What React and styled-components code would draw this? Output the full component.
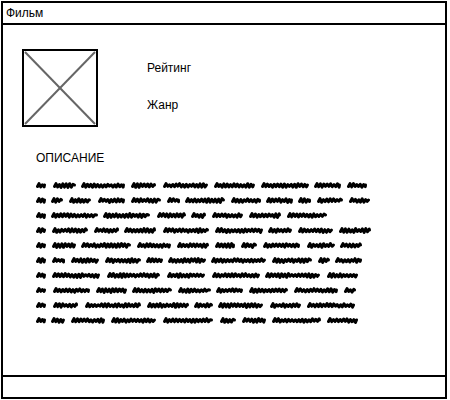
import React from 'react';
import styled, { createGlobalStyle } from 'styled-components';

const GlobalStyle = createGlobalStyle`
  html, body {
    margin: 0;
    padding: 0;
    background: #fff;
  }
  body {
    font-family: "Liberation Sans", Arial, sans-serif;
    color: #000;
  }
`;

// ширины строк "текста-заглушки" (в px)
const lineWidths = [331, 334, 291, 335, 326, 326, 322, 320, 319, 322];

function rng(seed) {
  let s = seed;
  return () => {
    s = (s * 16807) % 2147483647;
    return (s - 1) / 2147483646;
  };
}

function makeWords(total, seed) {
  const rand = rng(seed);
  const words = [];
  let x = 0;
  while (x < total) {
    let w = Math.round(10 + rand() * 46);
    if (total - x - w < 12) w = total - x;
    words.push([x, w]);
    x += w + 5 + Math.round(rand() * 2);
  }
  return words;
}

// волнистая "строка" слова
function wordPath(x0, w, seed) {
  const rand = rng(seed);
  let d = `M${x0 + 1.5} 5.5`;
  let up = true;
  for (let x = x0 + 3; x < x0 + w - 1.5; x += 1.7) {
    const y = (up ? 3.2 : 5.8) + (rand() - 0.5) * 1.2;
    d += ` L${x.toFixed(1)} ${y.toFixed(1)}`;
    up = !up;
  }
  d += ` L${x0 + w - 1.5} 4`;
  return d;
}

function Scribble({ width, seed }) {
  const words = makeWords(width, seed);
  return (
    <svg width={width} height="9" viewBox={`0 0 ${width} 9`}>
      {words.map(([x, w], i) => (
        <path
          key={i}
          d={wordPath(x, w, seed * 31 + i)}
          fill="none"
          stroke="#000"
          strokeWidth="3"
          strokeLinecap="round"
          strokeLinejoin="round"
        />
      ))}
    </svg>
  );
}

function App() {
  return (
    <>
      <GlobalStyle />
      <Frame>
        <TitleBar>Фильм</TitleBar>
        <Content>
          <TopRow>
            <ImageBox>
              <svg width="72" height="74" viewBox="0 0 72 74">
                <line x1="1" y1="1" x2="71" y2="73" stroke="#666" strokeWidth="2" />
                <line x1="71" y1="1" x2="1" y2="73" stroke="#666" strokeWidth="2" />
              </svg>
            </ImageBox>
            <Info>
              <Label>Рейтинг</Label>
              <Label>Жанр</Label>
            </Info>
          </TopRow>
          <Description>
            <Heading>ОПИСАНИЕ</Heading>
            <TextBlock>
              {lineWidths.map((w, i) => (
                <Scribble key={i} width={w} seed={i + 7} />
              ))}
            </TextBlock>
          </Description>
        </Content>
        <StatusBar />
      </Frame>
    </>
  );
}

export default App;

const Frame = styled.div`
  box-sizing: border-box;
  margin: 1px 0 0 1px;
  width: 446px;
  height: 398px;
  border: 2px solid #000;
  display: flex;
  flex-direction: column;
  background: #fff;
`;

const TitleBar = styled.div`
  height: 20px;
  line-height: 20px;
  padding-left: 3px;
  font-size: 12px;
  border-bottom: 2px solid #000;
`;

const Content = styled.div`
  flex: 1;
  display: flex;
  flex-direction: column;
  padding: 24px 0 0 19px;
`;

const TopRow = styled.div`
  display: flex;
  align-items: flex-start;
`;

const ImageBox = styled.div`
  box-sizing: border-box;
  width: 76px;
  height: 78px;
  border: 2px solid #000;
  display: flex;
`;

const Info = styled.div`
  display: flex;
  flex-direction: column;
  gap: 23px;
  margin: 12px 0 0 49px;
`;

const Label = styled.div`
  font-size: 12px;
  line-height: 14px;
`;

const Description = styled.div`
  display: flex;
  flex-direction: column;
  padding-left: 14px;
  margin-top: 24px;
`;

const Heading = styled.div`
  font-size: 12px;
  line-height: 14px;
`;

const TextBlock = styled.div`
  display: flex;
  flex-direction: column;
  gap: 6px;
  margin-top: 16px;
`;

const StatusBar = styled.div`
  height: 20px;
  border-top: 2px solid #000;
`;
